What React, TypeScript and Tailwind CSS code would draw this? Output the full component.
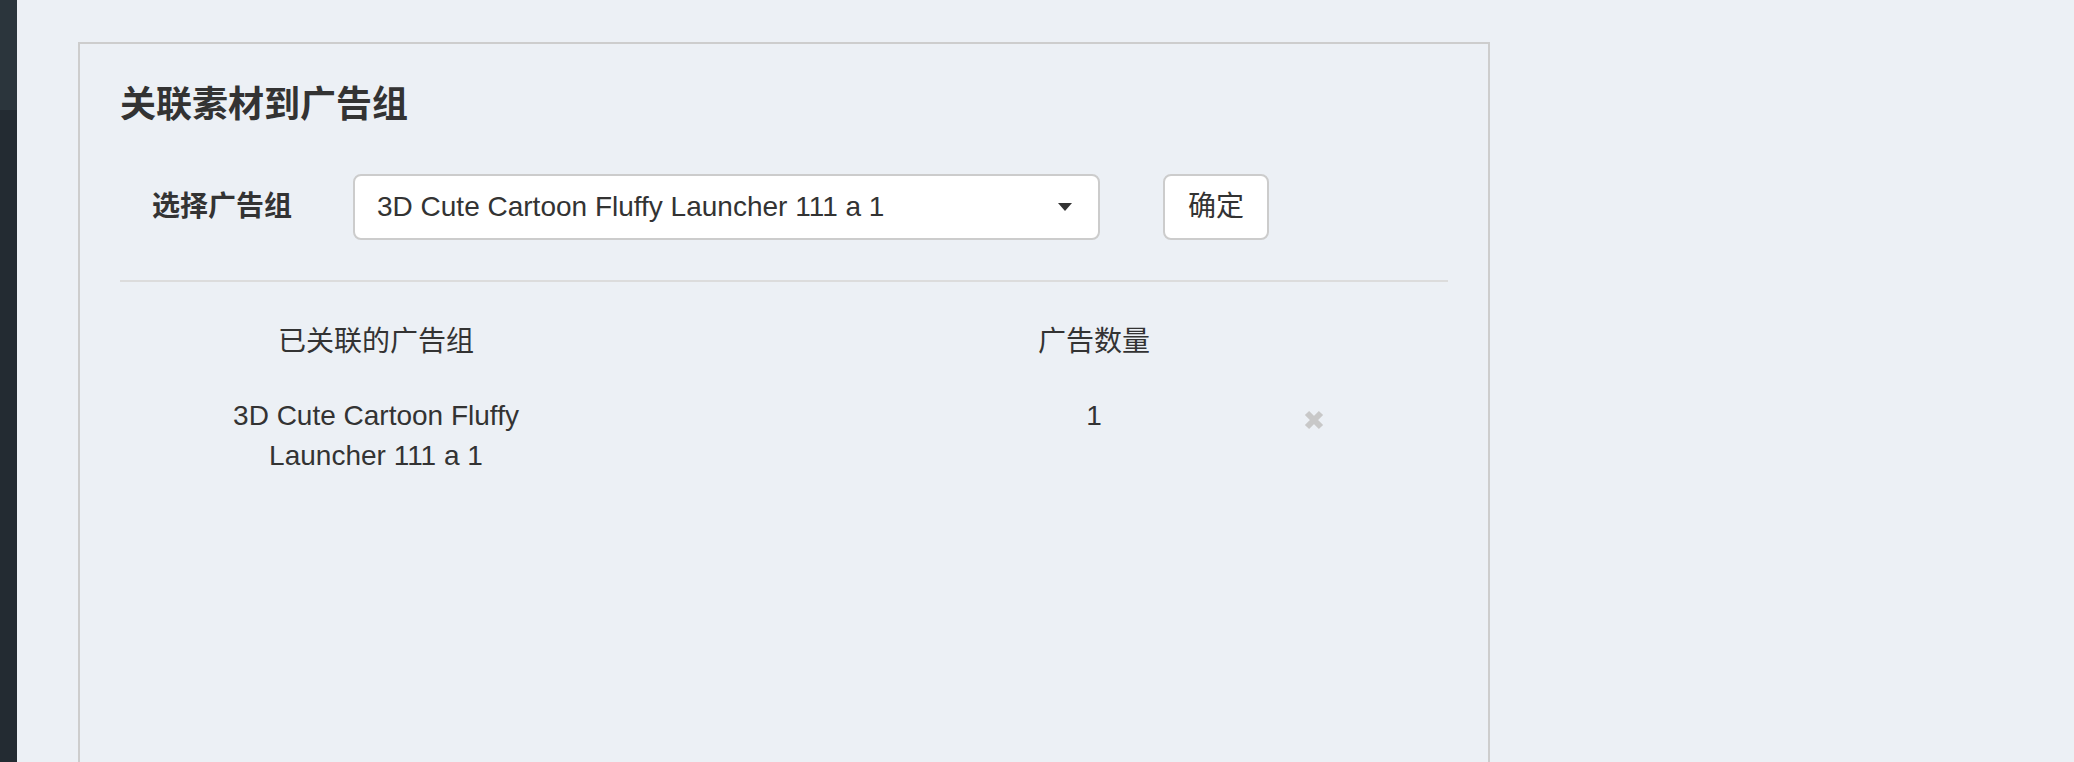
const font = "font-['Liberation_Sans','Noto_Sans_CJK_SC',sans-serif]";

type LinkedGroup = { name: string; count: number };

const linked: LinkedGroup[] = [{ name: "3D Cute Cartoon Fluffy Launcher 111 a 1", count: 1 }];

function RemoveIcon() {
  return (
    <svg width="20" height="20" viewBox="0 0 20 20">
      <path d="M3 3 L17 17 M17 3 L3 17" stroke="#c8c8c8" strokeWidth="6" />
    </svg>
  );
}

export default function App() {
  return (
    <div className={`flex h-[762px] overflow-hidden bg-[#ecf0f5] text-[#333] ${font}`}>
      <aside className="flex w-[17px] shrink-0 flex-col bg-[#232b32]">
        <div className="h-[110px] bg-[#2b353c]" />
      </aside>

      <main className="flex-1 pl-[61px] pt-[42px]">
        <div className="min-h-[900px] w-[1412px] border-2 border-[#cdcdcd] px-[40px] pt-[34px]">
          <h2 className="text-[36px] font-bold leading-[54px]">关联素材到广告组</h2>

          <div className="mt-[42px] flex items-center">
            <label className="ml-[32px] w-[201px] text-[28px] font-bold">选择广告组</label>
            <div className="flex h-[66px] w-[747px] items-center justify-between rounded-[8px] border-2 border-[#ccc] bg-white pl-[22px] pr-[26px] text-[28px]">
              <span>3D Cute Cartoon Fluffy Launcher 111 a 1</span>
              <svg width="14" height="8" viewBox="0 0 14 8">
                <path d="M0 0 L14 0 L7 8 Z" fill="#333" />
              </svg>
            </div>
            <button className="ml-[63px] h-[66px] w-[106px] rounded-[8px] border-2 border-[#ccc] bg-white text-[28px]">
              确定
            </button>
          </div>

          <div className="mt-[40px] h-[2px] bg-[#dcdcdc]" />

          <div className="mt-[40px] flex text-[28px] leading-[40px]">
            <div className="w-[512px] text-center">已关联的广告组</div>
            <div className="ml-[372px] w-[180px] text-center">广告数量</div>
          </div>

          {linked.map((g) => (
            <div key={g.name} className="mt-[34px] flex text-[28px] leading-[40px]">
              <div className="w-[512px]">
                <div className="mx-auto w-[340px] text-center">{g.name}</div>
              </div>
              <div className="ml-[372px] w-[180px] text-center">{g.count}</div>
              <div className="ml-[110px] mt-[4px] flex h-[40px] w-[40px] items-center justify-center">
                <RemoveIcon />
              </div>
            </div>
          ))}
        </div>
      </main>
    </div>
  );
}
